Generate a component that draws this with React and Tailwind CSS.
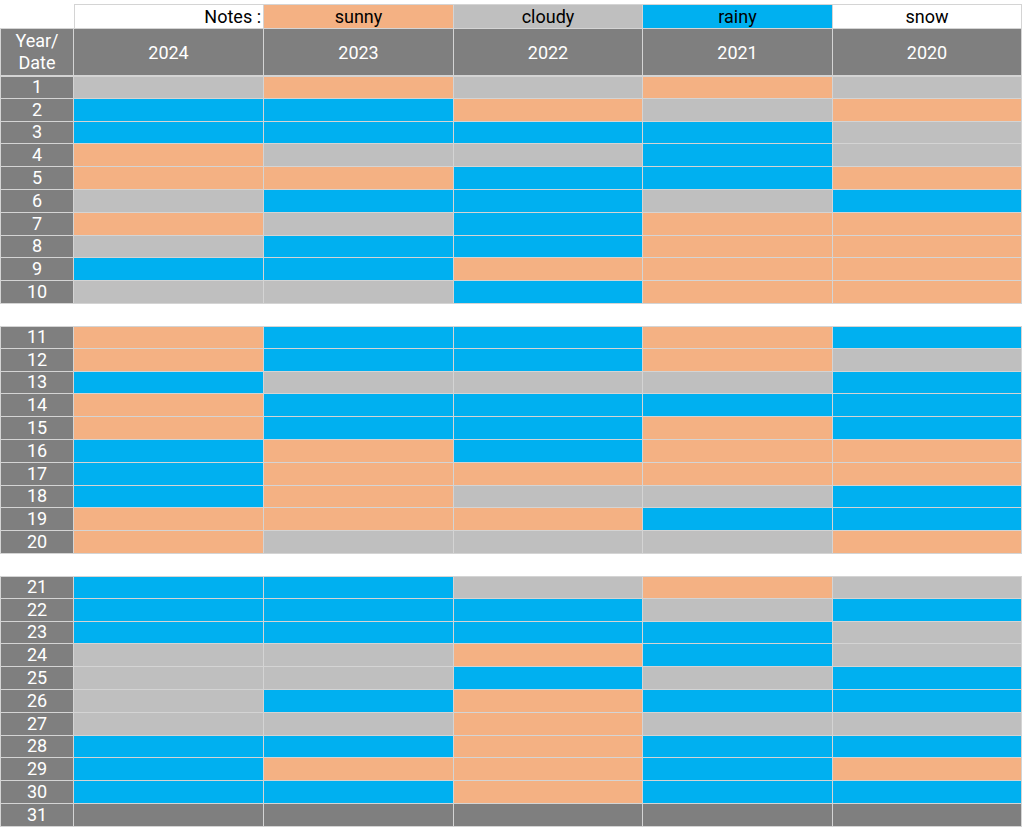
const S = "bg-[#f4b183]";
const C = "bg-[#bfbfbf]";
const R = "bg-[#00b0f0]";

const colors = { s: S, c: C, r: R, g: "bg-[#7f7f7f]" };

const years = ["2024", "2023", "2022", "2021", "2020"];

// one string per date, columns 2024..2020
const data = [
  "cscsc",
  "rrscs",
  "rrrrc",
  "sccrc",
  "ssrrs",
  "crrcr",
  "scrss",
  "crrss",
  "rrsss",
  "ccrss",
  "srrsr",
  "srrsc",
  "rcccr",
  "srrrr",
  "srrsr",
  "rsrss",
  "rssss",
  "rsccr",
  "sssrr",
  "scccs",
  "rrcsc",
  "rrrcr",
  "rrrrc",
  "ccsrc",
  "ccrcr",
  "crsrr",
  "ccscc",
  "rrsrr",
  "rssrs",
  "rrsrr",
  "ggggg",
];

const cols = "grid grid-cols-[74px_190px_190px_189px_190px_189px]";

const DayRow = ({ day, row, top }) => (
  <div className={cols}>
    <div
      className={`h-[22.8px] border-l border-r border-b border-[#d4d4d4] bg-[#7f7f7f] text-white flex items-center justify-center leading-none ${top ? "border-t" : ""}`}
    >
      {day}
    </div>
    {row.split("").map((k, i) => (
      <div
        key={i}
        className={`h-[22.8px] border-r border-b border-[#d4d4d4] ${colors[k]} ${top ? "border-t" : ""}`}
      />
    ))}
  </div>
);

const Block = ({ start, end }) => (
  <div>
    {data.slice(start, end).map((row, i) => (
      <DayRow key={start + i} day={start + i + 1} row={row} top={i === 0} />
    ))}
  </div>
);

export default function App() {
  return (
    <div
      className="w-[1024px] h-[838px] bg-white pt-[4px] text-[18px]"
      style={{ fontFamily: "Roboto, 'Noto Sans', sans-serif" }}
    >
      {/* legend */}
      <div className={cols}>
        <div className="h-[25px] border-b border-[#d4d4d4]" />
        <div className="h-[25px] border-t border-l border-r border-b border-[#d4d4d4] bg-white text-black flex items-center justify-end pr-[2px] leading-none">
          Notes :
        </div>
        <div className={`h-[25px] border-t border-r border-b border-[#d4d4d4] ${S} text-black flex items-center justify-center leading-none`}>
          sunny
        </div>
        <div className={`h-[25px] border-t border-r border-b border-[#d4d4d4] ${C} text-black flex items-center justify-center leading-none`}>
          cloudy
        </div>
        <div className={`h-[25px] border-t border-r border-b border-[#d4d4d4] ${R} text-black flex items-center justify-center leading-none`}>
          rainy
        </div>
        <div className="h-[25px] border-t border-r border-b border-[#d4d4d4] bg-white text-black flex items-center justify-center leading-none">
          snow
        </div>
      </div>

      {/* header */}
      <div className={cols}>
        <div className="h-[47px] border-l border-r border-b border-[#d4d4d4] bg-[#7f7f7f] text-white flex flex-col items-center justify-center leading-[22px]">
          <span>Year/</span>
          <span>Date</span>
        </div>
        {years.map((y) => (
          <div
            key={y}
            className="h-[47px] border-r border-b border-[#d4d4d4] bg-[#7f7f7f] text-white flex items-center justify-center"
          >
            {y}
          </div>
        ))}
      </div>

      <Block start={0} end={10} />
      <div className="h-[22px]" />
      <Block start={10} end={20} />
      <div className="h-[22px]" />
      <Block start={20} end={31} />
    </div>
  );
}
